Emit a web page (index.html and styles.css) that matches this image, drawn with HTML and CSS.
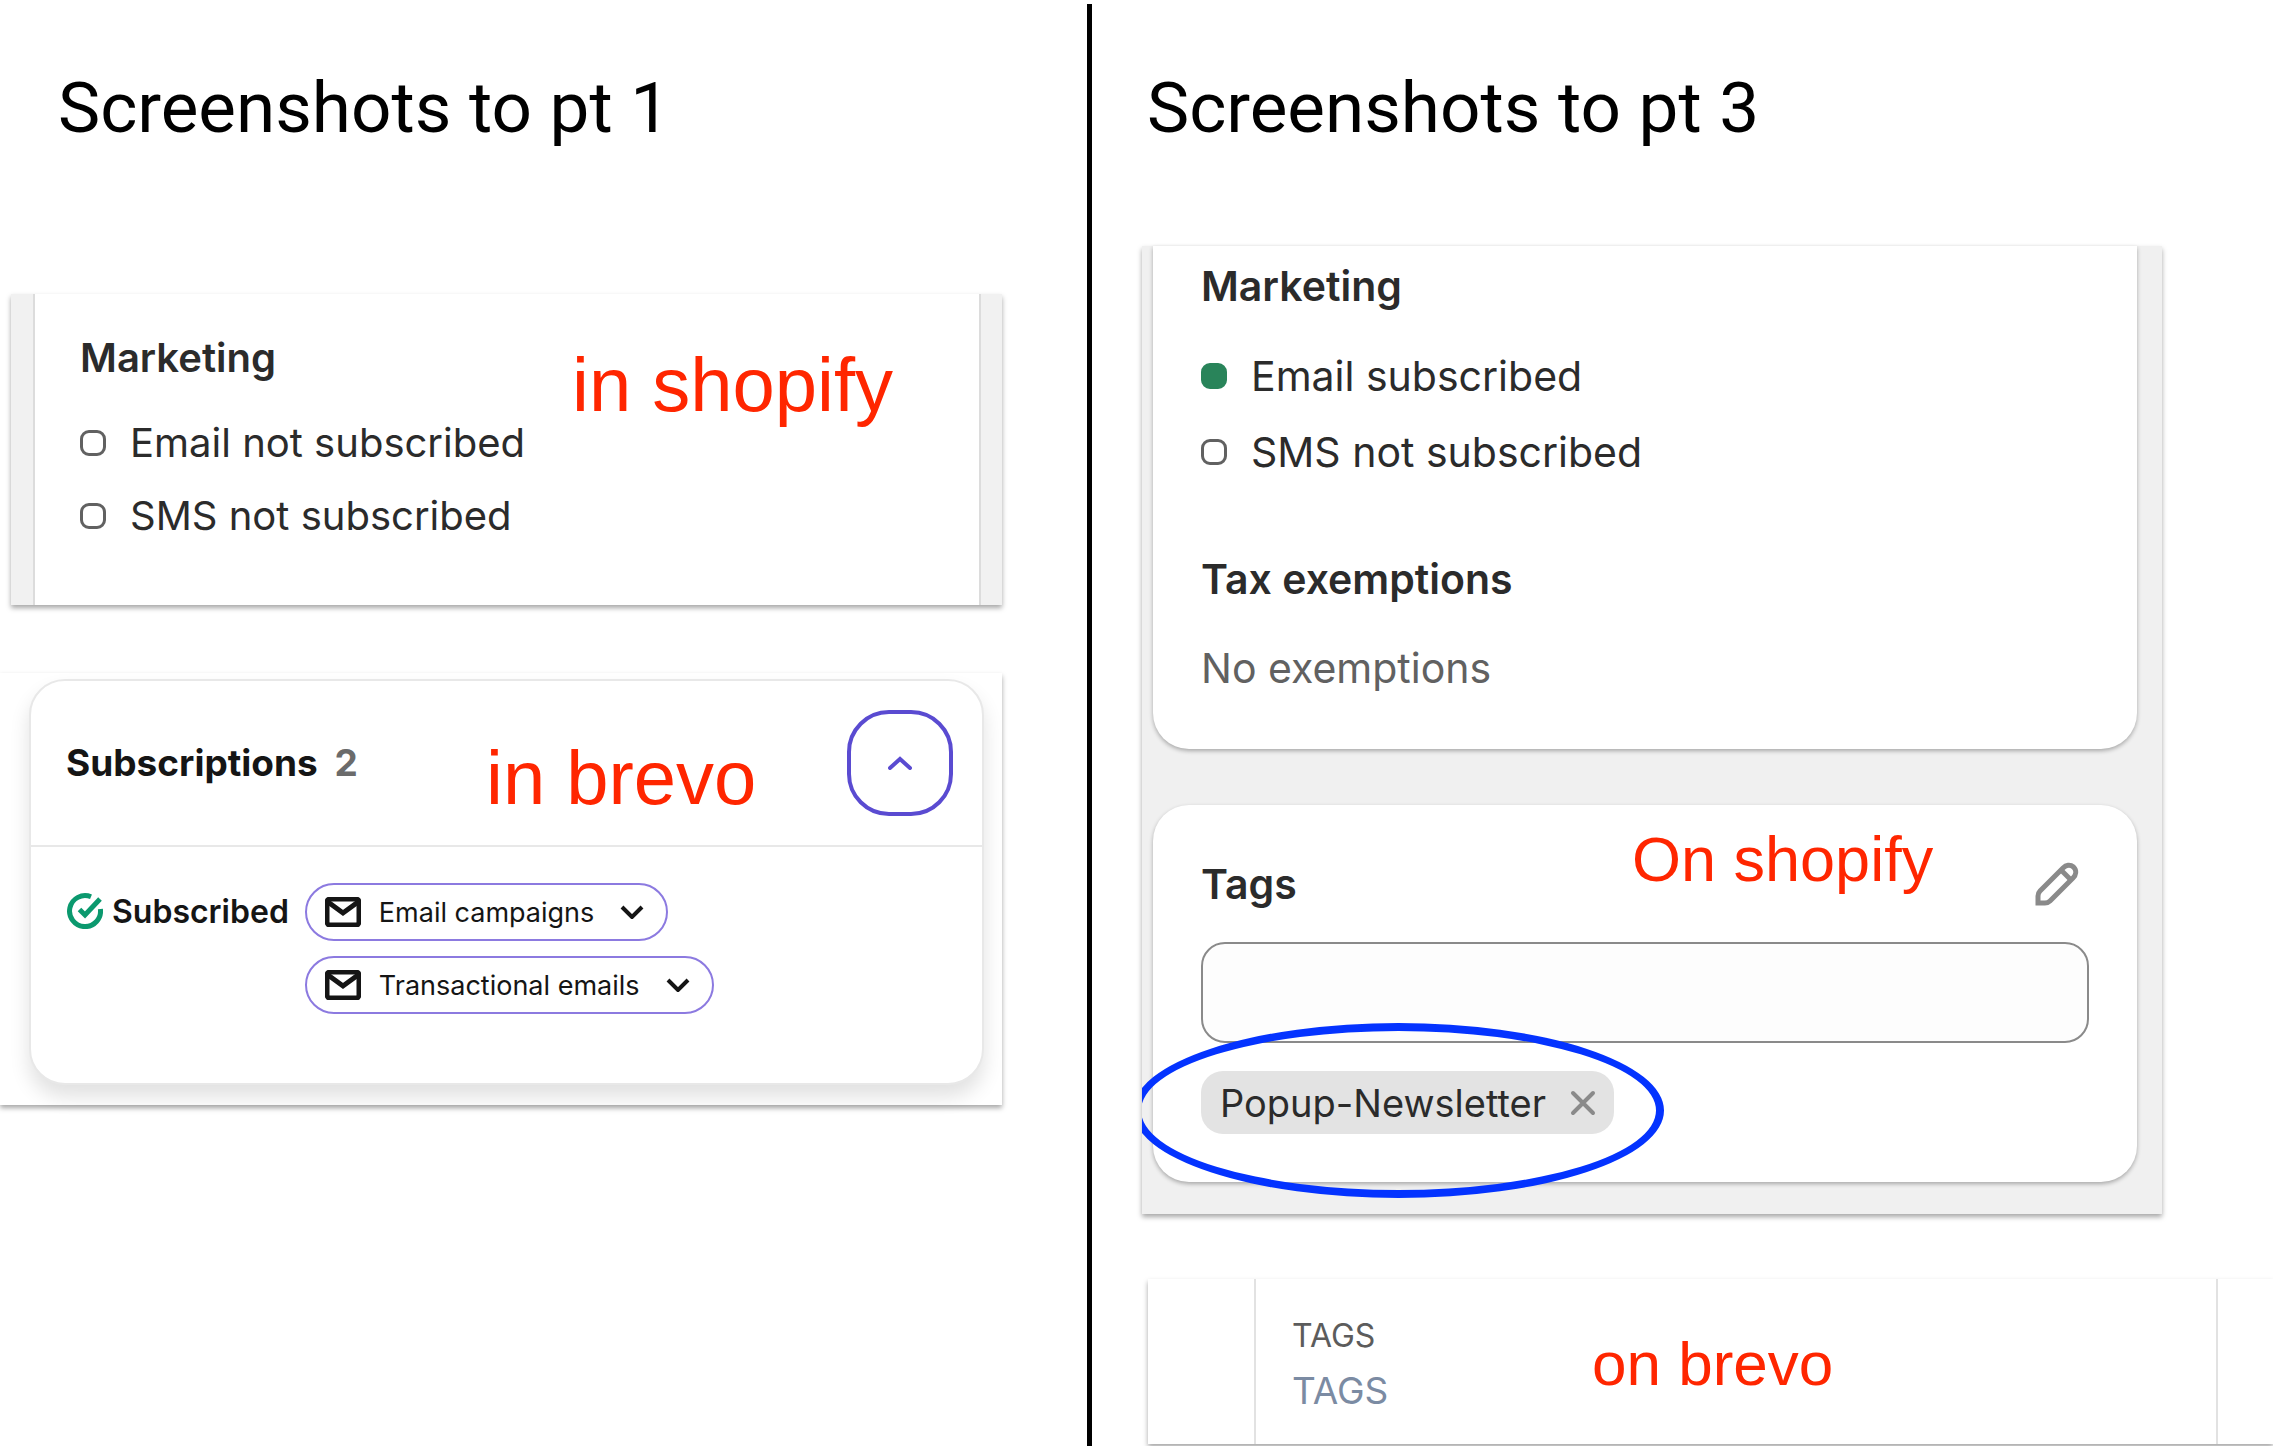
FILE: index.html
```
<!DOCTYPE html>
<html lang="en">
<head>
    <meta charset="utf-8">
    <title>Screenshots</title>
    <link rel="stylesheet" href="styles.css">
</head>
<body>
    <div class="board">
        <!-- point 1 -->
        <section class="column left">
            <h1>Screenshots to pt 1</h1>

            <div class="shot shopify-small">
                <div class="sheet">
                    <h2>Marketing</h2>
                    <ul class="status">
                        <li><span class="dot"></span>Email not subscribed</li>
                        <li><span class="dot"></span>SMS not subscribed</li>
                    </ul>
                </div>
                <p class="note note-in-shopify">in shopify</p>
            </div>

            <div class="shot brevo">
                <div class="brevo-card">
                    <div class="brevo-head">
                        <h2>Subscriptions <span class="count">2</span></h2>
                        <button class="collapse" type="button" aria-label="Collapse">
                            <svg width="24" height="14" viewBox="0 0 24 14"><path d="M2 12 L12 3 L22 12"/></svg>
                        </button>
                    </div>
                    <div class="brevo-body">
                        <div class="subscribed">
                            <svg class="check" width="36" height="36" viewBox="0 0 36 36">
                                <path d="M24 3.8 A15.5 15.5 0 1 0 33.4 16"/>
                                <path d="M12.5 16.5 L18 22 L33 6"/>
                            </svg>
                            <span>Subscribed</span>
                        </div>
                        <div class="channels">
                            <button class="channel" type="button">
                                <svg class="mail" width="36" height="30" viewBox="0 0 36 30"><rect x="2" y="2" width="32" height="26" rx="3"/><path d="M3 5 L18 16 L33 5"/></svg>
                                Email campaigns
                                <svg class="down" width="24" height="14" viewBox="0 0 24 14"><path d="M2 2 L12 12 L22 2"/></svg>
                            </button>
                            <button class="channel" type="button">
                                <svg class="mail" width="36" height="30" viewBox="0 0 36 30"><rect x="2" y="2" width="32" height="26" rx="3"/><path d="M3 5 L18 16 L33 5"/></svg>
                                Transactional emails
                                <svg class="down" width="24" height="14" viewBox="0 0 24 14"><path d="M2 2 L12 12 L22 2"/></svg>
                            </button>
                        </div>
                    </div>
                </div>
                <p class="note note-in-brevo">in brevo</p>
            </div>
        </section>

        <!-- point 3 -->
        <section class="column right">
            <h1>Screenshots to pt 3</h1>

            <div class="shot shopify-large">
                <div class="card card-top">
                    <h2>Marketing</h2>
                    <ul class="status">
                        <li><span class="dot on"></span>Email subscribed</li>
                        <li><span class="dot"></span>SMS not subscribed</li>
                    </ul>
                    <h2 class="tax">Tax exemptions</h2>
                    <p class="none">No exemptions</p>
                </div>
                <div class="card card-tags">
                    <div class="tags-head">
                        <h2><label for="tags">Tags</label></h2>
                        <button class="edit" type="button" aria-label="Edit tags">
                            <svg width="44" height="44" viewBox="0 0 44 44">
                                <path d="M3 41 V34 C3 32 4 30 5 29 L28 6 C31 3 35 2 38.500 5 C42 8.500 41 13 38 16 L15 39 C13.500 40.500 12 41 10 41 Z"/>
                                <path d="M26 8 L36 18"/>
                            </svg>
                        </button>
                    </div>
                    <input id="tags" class="tag-input" type="text">
                    <div class="tag">
                        Popup-Newsletter
                        <button class="remove" type="button" aria-label="Remove Popup-Newsletter">
                            <svg width="26" height="26" viewBox="0 0 26 26"><path d="M3 3 L23 23 M23 3 L3 23"/></svg>
                        </button>
                    </div>
                </div>
                <p class="note note-on-shopify">On shopify</p>
                <div class="ring-clip"><div class="ring"></div></div>
            </div>

            <div class="shot brevo-tags">
                <div class="tags-cell">
                    <p class="tags-name">TAGS</p>
                    <p class="tags-value">TAGS</p>
                </div>
                <p class="note note-on-brevo">on brevo</p>
            </div>
        </section>
    </div>
</body>
</html>
```
FILE: styles.css
```
* {
    box-sizing: border-box;
}

body {
    margin: 0;
    background: #fff;
    color: #2b2b2b;
    font-family: Inter, "Liberation Sans", sans-serif;
}

h1, h2, p, ul {
    margin: 0;
    padding: 0;
}

button {
    margin: 0;
    padding: 0;
    border: 0;
    background: none;
    font: inherit;
    color: inherit;
}

svg {
    display: block;
    fill: none;
    stroke: currentColor;
    flex: none;
}

/* Two columns with the black rule between them */
.board {
    display: grid;
    grid-template-columns: 1087fr 1186fr;
    min-height: 100vh;
}

.column {
    min-width: 0;
    padding-top: 68px;
}

.right {
    padding-left: 54px;
    background: linear-gradient(#000, #000) 0 4px / 5px 100% no-repeat;
}

h1 {
    color: #000;
    font: 400 71px/80px Roboto, sans-serif;
}

.left h1 {
    margin-left: 58px;
}

.right h1 {
    margin-left: 6px;
}

h2 {
    font-size: 40px;
    line-height: 48px;
    font-weight: 600;
}

.shot {
    position: relative;
    box-shadow: 0 3px 5px rgba(0, 0, 0, 0.35);
}

/* Red remarks lying over the shots */
.note {
    position: absolute;
    color: #ff2600;
    font-family: "Liberation Sans", Arial, sans-serif;
    line-height: 80px;
    white-space: nowrap;
}

/* Subscription state lists */
.status {
    display: flex;
    flex-direction: column;
    list-style: none;
}

.status li {
    display: flex;
    align-items: center;
    gap: 24px;
    line-height: 48px;
}

.dot {
    width: 26px;
    height: 26px;
    border: 3px solid #616161;
    border-radius: 9px;
}

.dot.on {
    border-color: #29845a;
    background: #29845a;
}

/* Left: Shopify */
.shopify-small {
    margin: 146px 85px 0 11px;
    padding: 0 21px 0 22px;
    background: #f1f1f1;
}

.sheet {
    padding: 40px 45px 65px;
    border: solid #dcdcdc;
    border-width: 0 2px;
    background: #fff;
    font-size: 40px;
}

.sheet .status {
    margin-top: 37px;
    gap: 25px;
}

.note-in-shopify {
    left: 561px;
    top: 51px;
    font-size: 76px;
}

/* Left: Brevo */
.brevo {
    margin: 68px 85px 0 0;
    padding: 6px 18px 20px 29px;
    overflow: clip;
    overflow-clip-margin: 12px;
}

.brevo-card {
    border: 2px solid #e8e8e8;
    border-radius: 36px;
    background: #fff;
    box-shadow: 0 12px 20px rgba(0, 0, 0, 0.12);
    color: #151515;
}

.brevo-head {
    display: flex;
    align-items: center;
    justify-content: space-between;
    padding: 29px 29px 29px 35px;
    border-bottom: 2px solid #e8e8e8;
}

.brevo-head h2 {
    font-size: 37px;
    font-weight: 700;
}

.count {
    margin-left: 8px;
    color: #6b6b6b;
}

.collapse {
    display: flex;
    align-items: center;
    justify-content: center;
    width: 106px;
    height: 106px;
    border: 4px solid #5a4bd1;
    border-radius: 42px;
    color: #5a4bd1;
}

.collapse svg {
    stroke-width: 4;
    stroke-linecap: round;
}

.brevo-body {
    display: flex;
    gap: 16px;
    padding: 36px 36px 69px;
}

.subscribed {
    display: flex;
    align-items: center;
    gap: 9px;
    height: 56px;
    font-size: 32px;
    font-weight: 600;
}

.check {
    color: #0b996e;
    stroke-width: 5;
}

.channels {
    display: flex;
    flex-direction: column;
    align-items: flex-start;
    gap: 15px;
}

.channel {
    display: flex;
    align-items: center;
    height: 58px;
    padding: 0 22px 0 18px;
    border: 2px solid #8c7ae0;
    border-radius: 29px;
    font-size: 27px;
    white-space: nowrap;
}

.mail {
    margin-right: 18px;
    stroke-width: 5;
}

.down {
    margin-left: 26px;
    stroke-width: 4;
}

.note-in-brevo {
    left: 486px;
    top: 65px;
    font-size: 76px;
}

/* Right: Shopify */
.shopify-large {
    margin: 98px 111px 0 1px;
    padding: 0 25px 32px 11px;
    background: #f0f0f0;
    font-size: 41px;
}

.shopify-large h2 {
    font-size: 41px;
}

.card {
    padding: 0 48px;
    border-radius: 36px;
    background: #fff;
    box-shadow: 0 2px 4px rgba(0, 0, 0, 0.3);
}

.card-top {
    padding-top: 16px;
    padding-bottom: 57px;
    border-radius: 0 0 36px 36px;
}

.card-top .status {
    margin-top: 42px;
    gap: 28px;
}

.tax {
    margin-top: 79px;
}

.none {
    margin-top: 41px;
    color: #616161;
    line-height: 48px;
}

.card-tags {
    margin-top: 56px;
    padding-top: 55px;
    padding-bottom: 48px;
}

.tags-head {
    display: flex;
    align-items: center;
    justify-content: space-between;
    padding-right: 10px;
}

.edit {
    color: #8a8a8a;
}

.edit svg {
    stroke-width: 5;
}

.tag-input {
    display: block;
    width: 100%;
    height: 101px;
    margin: 34px 0 28px;
    padding: 0 24px;
    border: 2px solid #8a8a8a;
    border-radius: 24px;
    background: #fdfdfd;
    font: inherit;
}

.tag {
    display: inline-flex;
    align-items: center;
    gap: 24px;
    height: 63px;
    padding: 0 18px 0 19px;
    border-radius: 22px;
    background: #e3e3e3;
    font-size: 38px;
    line-height: 48px;
    vertical-align: top;
}

.remove {
    color: #8a8a8a;
}

.remove svg {
    stroke-width: 4;
    stroke-linecap: round;
}

.note-on-shopify {
    left: 490px;
    top: 573px;
    font-size: 63px;
}

/* Blue ring round the tag, cut off at the edge of the shot */
.ring-clip {
    position: absolute;
    inset: 0;
    overflow: hidden;
    pointer-events: none;
}

.ring {
    position: absolute;
    left: -9px;
    top: 777px;
    width: 531px;
    height: 175px;
    border: 8px solid #0433ff;
    border-radius: 50%;
}

/* Right: Brevo */
.brevo-tags {
    margin: 65px 0 0 7px;
    padding: 0 55px 0 106px;
}

.tags-cell {
    padding: 37px 36px 29px;
    border: solid #e2e2e2;
    border-width: 0 2px;
}

.tags-name {
    color: #5c5c5c;
    font-size: 32px;
    line-height: 40px;
}

.tags-value {
    margin-top: 11px;
    color: #7b8ba3;
    font-size: 37px;
    line-height: 48px;
}

.note-on-brevo {
    left: 444px;
    top: 45px;
    font-size: 62px;
}
```
